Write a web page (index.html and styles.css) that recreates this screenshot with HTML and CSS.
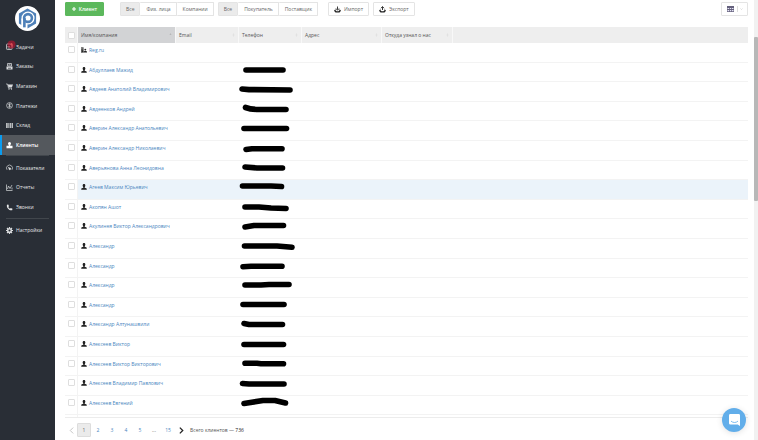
FILE: index.html
```html
<!DOCTYPE html>
<html lang="ru">
<head>
<meta charset="utf-8">
<title>Клиенты</title>
<link rel="stylesheet" href="styles.css">
</head>
<body>
<svg class="defs" aria-hidden="true">
  <symbol id="person" viewBox="0 0 12 12"><path d="M6 0c1.800 0 2.800 1.300 2.700 3C8.600 4.800 8 5.800 7.400 6.400v1.200c2 .4 4.100 1 4.100 2.200v1.700H.5V9.800c0-1.200 2.100-1.800 4.100-2.200V6.400C4 5.800 3.400 4.800 3.300 3 3.200 1.300 4.200 0 6 0z"/></symbol>
  <symbol id="company" viewBox="0 0 14 12"><path d="M0 0h6v12H0z"/><path d="M1 2h1.500v1.500H1zM3.800 2h1.500v1.500H3.800zM1 5h1.500v1.500H1zM3.800 5h1.500v1.500H3.800zM1 8h1.500v1.500H1z" fill="#fff"/><circle cx="10" cy="5" r="2.200"/><path d="M6 12V9.500L10 7.500l4 2V12z"/></symbol>
</svg>
<div class="app">
  <aside class="sidebar">
    <a class="logo" href="#" aria-label="Главная">
      <svg viewBox="0 0 48 48"><circle cx="24" cy="24" r="24" fill="#fff"/><path d="M24 5l16.500 9.500v19L24 43 7.500 33.500v-19z" fill="#4e80b8"/><path d="M18 44V24" stroke="#fff" stroke-width="12" fill="none"/><circle cx="25" cy="23" r="12.500" fill="#fff"/><circle cx="25" cy="23" r="7.500" fill="none" stroke="#4e80b8" stroke-width="5"/><path d="M18 41V23" stroke="#4e80b8" stroke-width="5" fill="none"/></svg>
    </a>
    <nav class="menu">
      <div class="menu-group menu-main">
        <a href="#"><svg class="icon" viewBox="0 0 14 14"><rect x="1" y="2" width="11" height="11" rx="1.500" fill="none" stroke="#d9dbdd" stroke-width="1.500"/><path d="M3 7h5M3 10h6"/><circle cx="11" cy="3" r="8" fill="#c8102e" opacity=".6" stroke="none"/><path d="M9 3l3-2v6" fill="none" stroke="#ff5a5a" stroke-width="1.500"/></svg>Задачи</a>
        <a href="#"><svg class="icon" viewBox="0 0 14 14"><path d="M3 1h8v5H3z" fill="none" stroke="#d9dbdd" stroke-width="1.500"/><path d="M1 8h12v5H1z" stroke="none" fill="#d9dbdd"/><path d="M5 3.500h4M1 7.500h12"/><path d="M4 10.500h6" stroke="#292e36"/></svg>Заказы</a>
        <a href="#"><svg class="icon" viewBox="0 0 14 14"><path d="M0 2h3l2 8h7" fill="none"/><path d="M3.500 3H14l-2 5.500H5z" fill="#d9dbdd" stroke="none"/><circle cx="6" cy="12" r="1.300" fill="#d9dbdd" stroke="none"/><circle cx="11" cy="12" r="1.300" fill="#d9dbdd" stroke="none"/></svg>Магазин</a>
        <a href="#"><svg class="icon" viewBox="0 0 14 14"><circle cx="7" cy="7" r="5.800" fill="none"/><path d="M9.500 5C8.500 3.600 5 3.800 5 5.500S9.500 7 9.500 8.700 5.500 10.500 4.500 9M7 3v8" fill="none"/></svg>Платежи</a>
        <a href="#"><svg class="icon" viewBox="0 0 14 14"><path d="M0 2h3.500v10H0zM4.500 2h2v10h-2zM7.500 2h3v10h-3zM11.500 2H14v10h-2.500z" fill="#b9bcbf" stroke="none"/></svg>Склад</a>
        <a class="active" href="#" aria-current="page"><svg class="icon" viewBox="0 0 14 14"><circle cx="7" cy="3" r="3" fill="#fff" stroke="none"/><path d="M5.500 5.500h3v2H13v5H1v-5h4.500z" fill="#fff" stroke="none"/></svg>Клиенты</a>
      </div>
      <div class="menu-group menu-stats">
        <a href="#"><svg class="icon" viewBox="0 0 14 14"><path d="M2 11.500a6 6 0 1 1 10 0M7 9L4 6" fill="none"/><circle cx="7.500" cy="9.500" r="1.800" fill="#d9dbdd"/></svg>Показатели</a>
        <a href="#"><svg class="icon" viewBox="0 0 14 14"><path d="M1 1v12h12M3 10l2-6 3 5 4-7M12 7v4" fill="none"/></svg>Отчеты</a>
        <a href="#"><svg class="icon" viewBox="0 0 14 14"><path d="M2 1.500L4.500 1 6 4.500 4.500 6c.8 1.800 1.800 2.800 3.500 3.600L9.500 8l3.500 1.600-.6 2.700C8 14.500 0 8 2 1.500z" fill="#e6e7e8" stroke="none"/></svg>Звонки</a>
      </div>
      <div class="menu-group menu-settings">
        <a href="#"><svg class="icon" viewBox="0 0 14 14"><circle cx="7" cy="7" r="3.600" fill="none" stroke-width="3"/><path d="M7 0v3M7 11v3M0 7h3M11 7h3M2 2l2 2M10 10l2 2M12 2l-2 2M4 10l-2 2" stroke-width="2.400"/></svg>Настройки</a>
      </div>
    </nav>
  </aside>

  <main class="content">
    <div class="toolbar">
      <button class="btn add" type="button"><svg class="plus" viewBox="0 0 10 10"><path d="M5 0v10M0 5h10" stroke="#fff" stroke-width="2.800"/></svg>Клиент</button>
      <div class="segment">
        <button class="btn on" type="button">Все</button><button class="btn" type="button">Физ. лица</button><button class="btn" type="button">Компании</button>
      </div>
      <div class="segment roles">
        <button class="btn on" type="button">Все</button><button class="btn" type="button">Покупатель</button><button class="btn" type="button">Поставщик</button>
      </div>
      <div class="transfer">
        <button class="btn" type="button"><svg class="tray" viewBox="0 0 14 14"><path d="M7 1v6M4 5l3 3.500L10 5" fill="none" stroke="#222" stroke-width="1.800"/><path d="M3 6L0 9.500 3 13h8l3-3.500L11 6v2.500L9 10.500H5L3 8.500z" fill="#222"/></svg>Импорт</button>
        <button class="btn" type="button"><svg class="tray" viewBox="0 0 14 14"><path d="M7 8V2M4 4.500L7 1l3 3.500" fill="none" stroke="#222" stroke-width="1.800"/><path d="M3 6L0 9.500 3 13h8l3-3.500L11 6v2.500L9 10.500H5L3 8.500z" fill="#222"/></svg>Экспорт</button>
      </div>
      <button class="btn view" type="button" aria-label="Вид таблицы"><svg class="grid-icon" viewBox="0 0 14 12"><path d="M0 0h14v12H0z" fill="#65617d"/><path d="M1 4h3v2H1zM5.500 4h3v2h-3zM10 4h3v2h-3zM1 8h3v2.500H1zM5.500 8h3v2.500h-3zM10 8h3v2.500h-3z" fill="#e4e4f5"/></svg><svg class="caret" viewBox="0 0 6 6"><path d="M1 2l2 2 2-2" fill="none" stroke="#bbb"/></svg></button>
    </div>

    <div class="table-wrap">
      <table class="clients">
        <colgroup><col class="c-check"><col class="c-name"><col class="c-email"><col class="c-phone"><col class="c-address"><col class="c-source"><col></colgroup>
        <thead>
          <tr>
            <th><input type="checkbox" aria-label="Выбрать всех"></th>
            <th class="sorted"><span class="head">Имя/компания<svg class="sort" viewBox="0 0 6 8"><path d="M1 3l2-2 2 2z" fill="#999"/></svg></span></th>
            <th><span class="head">Email<svg class="sort" viewBox="0 0 6 8"><path d="M1 3l2-2 2 2zM1 5l2 2 2-2z" fill="#d4d4d4"/></svg></span></th>
            <th><span class="head">Телефон<svg class="sort" viewBox="0 0 6 8"><path d="M1 3l2-2 2 2zM1 5l2 2 2-2z" fill="#d4d4d4"/></svg></span></th>
            <th><span class="head">Адрес<svg class="sort" viewBox="0 0 6 8"><path d="M1 3l2-2 2 2zM1 5l2 2 2-2z" fill="#d4d4d4"/></svg></span></th>
            <th><span class="head">Откуда узнал о нас<svg class="sort" viewBox="0 0 6 8"><path d="M1 3l2-2 2 2zM1 5l2 2 2-2z" fill="#d4d4d4"/></svg></span></th>
            <th></th>
          </tr>
        </thead>
        <tbody id="rows"></tbody>
      </table>
    </div>

    <footer class="pager">
      <a class="arrow" href="#" aria-label="Назад"><svg viewBox="0 0 6 8"><path d="M5 0.500L1.500 4 5 7.500" fill="none" stroke="#bbb"/></svg></a>
      <a class="current" href="#" aria-current="page">1</a><a href="#">2</a><a href="#">3</a><a href="#">4</a><a href="#">5</a><span class="dots">...</span><a href="#">15</a>
      <a class="arrow" href="#" aria-label="Вперёд"><svg viewBox="0 0 6 8"><path d="M1 0.500L4.500 4 1 7.500" fill="none" stroke="#222" stroke-width="1.500"/></svg></a>
      <span class="total">Всего клиентов — <span class="count">736</span></span>
    </footer>
  </main>

  <div class="scrollbar"><div class="thumb"></div></div>
</div>
<button class="chat" type="button" aria-label="Чат"><svg viewBox="0 0 24 26"><path d="M3 0h18a3 3 0 0 1 3 3v23l-5-3H3a3 3 0 0 1-3-3V3a3 3 0 0 1 3-3z" fill="#fff"/><path d="M5 16c4 3.500 10 3.500 14 0" fill="none" stroke="#62aeea" stroke-width="1.800" stroke-linecap="round"/></svg></button>
<script src="rows.js"></script>
</body>
</html>
```
FILE: styles.css
```css
* { box-sizing: border-box; }

body {
  margin: 0;
  background: #fff;
  color: #555;
  font: 5px/8px "Open Sans", "Noto Sans", sans-serif;
}

a { color: #4a86c0; text-decoration: none; }
svg { display: block; flex: none; }
.defs { position: absolute; width: 0; height: 0; }

.app {
  display: grid;
  grid-template-rows: minmax(0, 1fr);
  grid-template-columns: 55px minmax(0, 1fr) 4px;
  height: 100vh;
}

/* Sidebar */
.sidebar { background: #292e36; }
.logo { display: block; padding: 6px 0 6px 15px; }
.logo svg { width: 25px; height: 25px; }
.menu-group { display: grid; grid-auto-rows: 1fr; }
.menu-main { height: 118px; }
.menu-stats { height: 63px; padding: 3px 0 1px; }
.menu-settings { height: 23px; padding-top: 1px; }
.menu-stats, .menu-settings { position: relative; }
.menu-stats::before, .menu-settings::before {
  content: "";
  position: absolute;
  top: 0;
  left: 6px;
  right: 6px;
  border-top: 1px solid #41464c;
}
.menu a {
  display: flex;
  align-items: center;
  gap: 3px;
  padding-left: 6px;
  color: #e4e5e6;
}
.menu a.active {
  padding-left: 4px;
  border-left: 2px solid #0a9cf0;
  background: #54585d;
  color: #fff;
  font-weight: 600;
}
.icon { width: 7px; height: 7px; overflow: visible; stroke: #d9dbdd; stroke-width: 1.4; }

/* Main area */
.content {
  display: flex;
  flex-direction: column;
  min-width: 0;
  padding: 2px 6px 0 10px;
}
.toolbar { display: flex; flex: none; margin-bottom: 11px; }
.btn {
  display: flex;
  align-items: center;
  justify-content: center;
  height: 14px;
  padding: 0 5px;
  border: 1px solid #e4e4e4;
  border-radius: 1px;
  background: #fff;
  color: #666;
  font: inherit;
}
.btn.add {
  gap: 3px;
  width: 39px;
  margin-right: 16px;
  border-color: #5cb85c;
  background: #5cb85c;
  color: #fff;
  font-weight: 600;
}
.plus { width: 4px; height: 4px; }
.segment { display: flex; margin-right: 4px; }
.segment .btn + .btn { padding-left: 6px; border-left: 0; }
.btn.on { background: #ebebeb; }
.roles { margin-right: 10px; }
.transfer { display: flex; gap: 4px; }
.transfer .btn { gap: 3px; }
.tray { width: 7px; height: 7px; }
.view { gap: 3px; width: 27px; margin-left: auto; }
.grid-icon { width: 7px; height: 6px; }
.caret { width: 6px; height: 6px; padding-left: 2px; border-left: 1px solid #ddd; }

/* Client table */
.table-wrap {
  flex: 1;
  min-height: 0;
  overflow: hidden;
  border-bottom: 1px solid #ececec;
}
.clients {
  width: 100%;
  height: 408px;
  border-collapse: separate;
  border-spacing: 0;
  table-layout: fixed;
}
.c-check { width: 13px; }
.c-name { width: 98px; }
.c-email, .c-phone { width: 63px; }
.c-address { width: 80px; }
.c-source { width: 71px; }
thead { height: 16px; }
th {
  height: 16px;
  padding: 0 3px;
  border-right: 1px solid #f8f8f8;
  background: #eee;
  font-weight: 400;
  text-align: left;
}
th:last-child { border-right: 0; }
th.sorted { background: #d2d3d5; }
.head { display: flex; align-items: center; justify-content: space-between; }
.sort { width: 3px; height: 4px; }
tbody tr { height: 5%; }
td {
  padding: 3px 3px 0;
  border-bottom: 1px solid #f3f3f3;
  vertical-align: top;
}
td:first-child { border-right: 1px solid #f3f3f3; }
tr.hover td + td { background: #ebf3fa; }
input[type="checkbox"] {
  display: block;
  appearance: none;
  width: 7px;
  height: 7px;
  margin: 0;
  border: 1px solid #dedede;
  border-radius: 1px;
  background: #fff;
}
.name { display: flex; align-items: center; gap: 2px; }
.name svg { width: 6px; height: 6px; fill: #222; }
td.phone { padding: 1px 0 0; }
.mark {
  width: 60px;
  height: 12px;
  overflow: visible;
  fill: none;
  stroke: #000;
  stroke-width: 5.6;
  stroke-linecap: round;
  stroke-linejoin: round;
}

/* Pagination */
.pager {
  display: flex;
  flex: none;
  align-items: center;
  height: 22px;
  padding: 2px 0 0;
}
.pager a, .dots {
  display: flex;
  align-items: center;
  justify-content: center;
  width: 14px;
  height: 14px;
}
.pager a.arrow { width: 12px; }
.pager a.current { border: 1px solid #ddd; border-radius: 1px; background: #ebebeb; color: #666; }
.arrow svg { width: 5px; height: 7px; }
.total { margin-left: 3px; }
.count { color: #222; }

/* Scrollbar */
.scrollbar { padding-top: 37px; background: #f1f1f1; }
.thumb { height: 164px; border-radius: 1px; background: #b8b8b8; }

.chat {
  position: fixed;
  right: 12px;
  bottom: 8px;
  display: grid;
  place-items: center;
  width: 24px;
  height: 24px;
  padding: 0;
  border: 0;
  border-radius: 50%;
  background: #62aeea;
  box-shadow: 0 1px 6px rgba(0, 0, 0, .12);
}
.chat svg { width: 11px; height: 12px; }
```
FILE: rows.js
```js
// Client name and the stroke that hides the phone number.
const clients = [
  ["Reg.ru", ""],
  ["Абдуллаев Мажид", "M7 6H44"],
  ["Авдеев Анатолий Владимирович", "M3 6L10 6.600L51 7"],
  ["Авдеенков Андрей", "M6.500 4.500Q12 6.500 20 6.500H47"],
  ["Аверин Александр Анатольевич", "M5 6.500H47.500"],
  ["Аверин Александр Николаевич", "M7 7.500L13 6.800H43"],
  ["Аверьянова Анна Леонидовна", "M6 5L18 6H43.500"],
  ["Агеев Максим Юрьевич", "M3.500 5H32L42.500 5.500"],
  ["Акопян Ашот", "M6 6H20L32 7L47 7.500"],
  ["Акулинея Виктор Александрович", "M6 7L15 5.500H44.500"],
  ["Александр", "M5.500 6H38L53 7.300"],
  ["Александр", "M4 6.700L12 6.200H43"],
  ["Александр", "M6 6H22L30 5.500H50"],
  ["Александр", "M4 5.500H45"],
  ["Александр Алтунашвили", "M5 5.500L10 6.500H43.500"],
  ["Алексеев Виктор", "M5 6.500H44.500"],
  ["Алексеев Виктор Викторович", "M6 5.300H18L22 5.800H44.500"],
  ["Алексеев Владимир Павлович", "M3.500 6.500L10 7H45"],
  ["Алексеев Евгений", "M5 6.500L24 3.500H36L46.500 6"],
  ["", ""]
];

document.getElementById("rows").innerHTML = clients.map(([name, stroke], i) => `
  <tr${i === 7 ? ' class="hover"' : ""}>
    <td><input type="checkbox" aria-label="Выбрать"></td>
    <td>${name ? `<a class="name" href="#"><svg><use href="#${i ? "person" : "company"}"/></svg>${name}</a>` : ""}</td>
    <td></td>
    <td class="phone">${stroke ? `<svg class="mark" viewBox="0 0 60 12"><path d="${stroke}"/></svg>` : ""}</td>
    <td></td><td></td><td></td>
  </tr>`).join("");
```
